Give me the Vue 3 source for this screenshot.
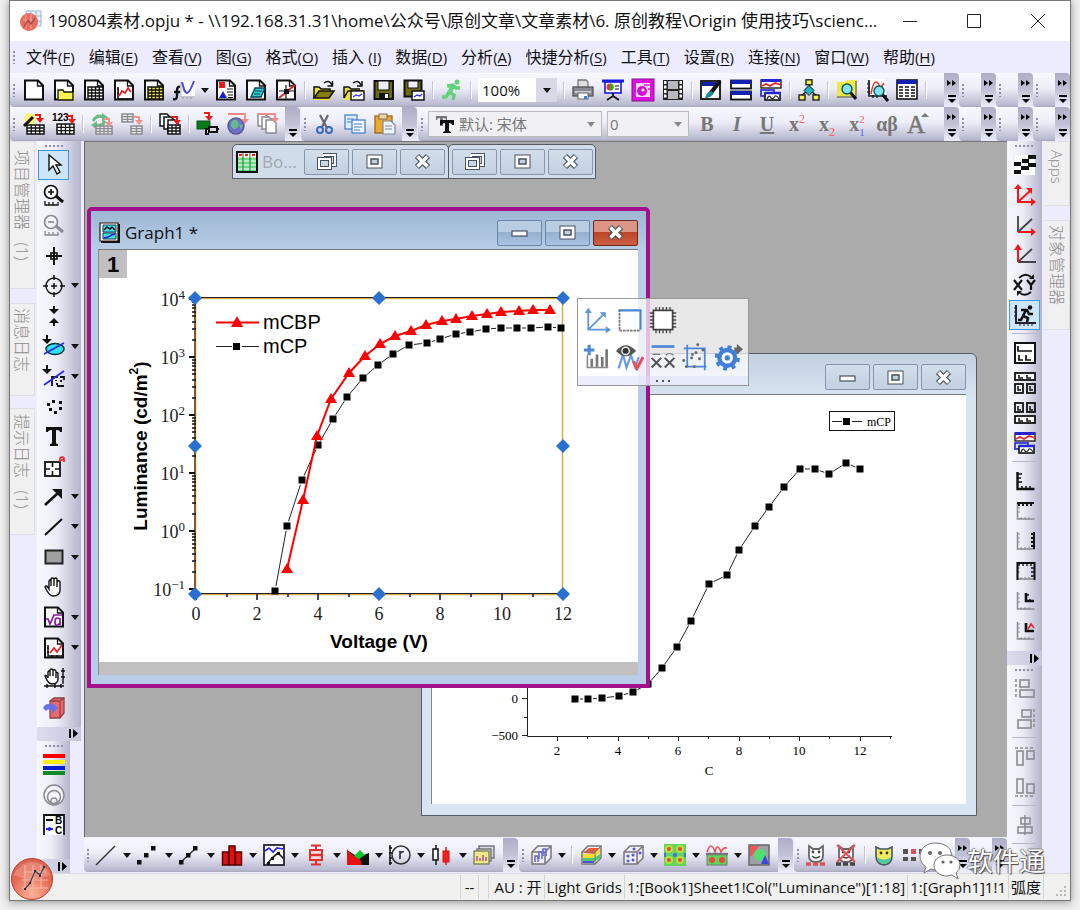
<script setup>
const K = '#111'
const G = '#8a8a90'
const p = (d, stroke = K, w = 2, fill = 'none') =>
  `<path d="${d}" fill="${fill}" stroke="${stroke}" stroke-width="${w}"/>`
const f = (d, fill = K) => `<path d="${d}" fill="${fill}"/>`
const r = (x, y, w, h, fill, stroke = 'none', sw = 1) =>
  `<rect x="${x}" y="${y}" width="${w}" height="${h}" fill="${fill}" stroke="${stroke}" stroke-width="${sw}"/>`
const c = (x, y, rad, fill, stroke = 'none', sw = 1) =>
  `<circle cx="${x}" cy="${y}" r="${rad}" fill="${fill}" stroke="${stroke}" stroke-width="${sw}"/>`
const grid = (x, y, w, h, nx, ny, fill = '#fff', stroke = K) => {
  let d = ''
  for (let i = 1; i < nx; i++) d += `M${x + (w * i) / nx} ${y}v${h}`
  for (let i = 1; i < ny; i++) d += `M${x} ${y + (h * i) / ny}h${w}`
  return r(x, y, w, h, fill, stroke, 1.5) + p(d, stroke, 1.3)
}
const doc = p('M2 1.5h13l5 5v14H2z', K, 2, '#fff') + p('M14.5 1.5v5.5h5', K, 1.3)
const redArrow = (x, y, col = '#f01818') => p(`M${x} ${y}h5v4`, col, 2) + f(`M${x + 1} ${y + 3}h8l-4 5z`, col)
const lens = (x, y) => p(`M${x + 3} ${y + 3}l6 7`, '#112', 3) + c(x, y, 5, '#7fe4f0', '#155', 1.4)
const page3 = (col) =>
  p('M1 1h7l3 3v9H1z', col, 1.5, '#fff') + p('M5 4h7l3 3v9H5z', col, 1.5, '#fff') + p('M9 7h7l3 3v10H9z', col, 1.5, '#fff')
const cube = p('M2 8l6-6h13v12l-6 6H2z', '#777', 1.5, '#eeeef8') + p('M2 8h13v12M15 8l6-6', '#777', 1.5)
const frameAxes = p('M3.5 2v17h17', '#8a8a90', 1.5) + p('M3 4h3M3 8h3M3 12h3M7 17v3M11 17v3M15 17v3', '#8a8a90', 1)
const dog = p('M4 2v10q0 6 7 6t7-6V2l-4 3H8z', '#666', 1.8, '#fff') + c(8, 8, 1.4, '#444') + c(14, 8, 1.4, '#444') + p('M7 12q4 4 8 0', '#444', 1.4)

const icons = {
  newProject: doc,
  newFolder: doc + f('M5 11h6l1 2h9v9H5z', '#f2f255') + p('M5 20V11h5l1 2h9v8H5', K, 1.3),
  newBook: doc + grid(5, 8, 15, 12, 4, 4),
  newGraph: doc + p('M5 8v12h14', K, 1.6) + p('M6 17l3-5 3 2 3-5 3 4', '#e22', 1.8) + p('M4 10h2M4 14h2M9 19v2M14 19v2', K, 1),
  newMatrix: doc + grid(5, 8, 15, 12, 4, 4, '#f5ec3c'),
  newFunction: r(8, 2, 14, 15, '#fff') + p('M8 3v15h13', '#b8b8c4', 1) + p('M9 3c2 8 3 11 5 11s4-4 7-12', '#4a48e8', 2) + p('M7 8q-3-1-3 4v5q0 4-4 3M1 13h6', K, 2.4) + p('M10 18v2M14 18v2M18 18v2', '#999', 1),
  newLayout: doc + r(4, 3, 6, 6, '#f01818') + p('M12 10h6M12 13h6', K, 1.2) + f('M4 19l4-7 4 7z', '#1818e0') + p('M13 16h5M13 18.5h5', K, 1),
  newNotes: doc + p('M6 18l4-9h10l-4 9z', '#045', 1.3, '#33ccd0') + p('M9 15h6M10 12h7', '#045', 1),
  newExcel: doc + p('M4 12h16M11 6v14', K, 1.2) + p('M4 19L20 6', '#e22', 2) + r(9, 10, 5, 5, K),
  open: f('M1 8h6l2 2h9v11H1z', '#e8e040') + p('M1 19V8h5l2 2h9v2', K, 1.5) + p('M1 19l5-7h15l-5 7z', K, 1.5, '#857d10') + p('M11 4q5-4 8 2M19.5 2v5h-5', K, 1.5),
  openTemplate: f('M1 8h6l2 2h8v11H1z', '#e8e040') + p('M1 19V8h5l2 2h9M1 19l4-7h15', K, 1.5) + p('M10 4q5-4 8 2M19 2v5h-5', K, 1.5) + r(8, 12, 13, 9, '#fff', K, 1.4) + p('M10 18l3-2 3 1 3-2', '#33e', 1.3),
  save: r(1.5, 2, 18.5, 18, '#6b6a10', K, 2) + r(5, 2, 11, 9, '#eef', K, 1) + r(6, 14, 10, 6, K) + r(12, 15, 3, 4, '#fff'),
  saveTemplate: r(1.5, 1.5, 17, 16, '#6b6a10', K, 2) + r(5, 2, 10, 7, '#eef', K, 1) + r(9, 12, 12, 9, '#fff', K, 1.5) + p('M11 18l3-2 3 1 2-2', '#33e', 1.4),
  run: c(16, 3, 2.5, '#62d27a') + p('M6 7l6-1 3 3 4 0M12 7l-4 6 5 3-1 5M9 12l-4 6H1M12 7l-2 5', '#62d27a', 3.4),
  print: f('M6 1h9l1 7H5z', '#ddd') + p('M6 8V1h8l2 2v5', '#777', 1.3) + r(1, 8, 20, 9, '#8a8a94', '#555', 1.3) + r(3, 12, 16, 2, '#c8c8d0') + r(6, 14, 10, 6, '#fff', '#666', 1) + r(12, 17, 3, 3, '#38c'),
  slide: p('M0 2h22', '#1a1ae0', 3) + r(3, 3, 16, 11, '#fff', '#1a1ae0', 1.6) + c(8, 8, 3.5, '#e33') + f('M8 8V4.5a3.5 3.5 0 0 1 0 7z', '#1b1') + p('M13 7h4M13 10h4', K, 1) + p('M11 14v4M5 21l6-4 6 4', K, 1.8),
  video: r(0, 0, 22, 22, '#e010e0', '#80108a', 1) + r(4, 4, 14, 14, '#ffd7ff') + c(10, 12, 5, '#d010d0') + c(11, 11, 1.6, '#fff') + p('M12 6h5M16 10h2', '#e010e0', 1.6),
  film: r(1, 1, 20, 20, '#222') + r(6, 2, 10, 8, '#b8b8c0') + r(6, 12, 10, 8, '#b8b8c0') + [2, 6.5, 11, 15.5].map((y) => r(2, y, 2.5, 3, '#fff') + r(17.5, y, 2.5, 3, '#fff')).join(''),
  editPen: r(1, 2, 19, 18, '#fff', K, 1.8) + r(2, 3, 14, 4, '#1020a0') + p('M20 2L10 15', K, 4) + f('M11 12q-5 2-6 7 6 0 9-5z', '#188a90'),
  splitH: r(1, 1.5, 20, 8, '#fff', K, 1.8) + r(1, 1, 20, 4, '#1420b0') + r(1, 12.5, 20, 8, '#fff', K, 1.8) + r(1, 12, 20, 4, '#1420b0'),
  cascade: r(1, 1, 20, 8, '#fff', K, 1.3) + r(1, 0, 20, 3, '#2424d0') + p('M2 7l4-2 4 2 5-3 6 2', '#e22', 1.6) + r(1, 11, 13, 6, '#dde', '#2424d0', 1.6) + r(5, 14, 15, 7, '#fff', K, 1.6) + p('M5 14h16', '#2424d0', 2.5) + p('M7 20q2-5 4-1 2 2 4-2 2-1 4 3', '#333', 1.3),
  tree: r(8, 0.8, 6, 5, '#f2f255', K, 1.3) + p('M11 6v5M11 11L4 16M11 11l7 5', K, 1.4) + f('M11 6l5 5-5 5-5-5z', '#1cb8c8') + p('M11 6.5l5 5-5 5-5-5z', K, 1) + r(1, 16, 6, 5, '#f2f255', K, 1.3) + r(15, 16, 6, 5, '#f2f255', K, 1.3),
  findFolder: f('M1 3h8l2-2h10v18H1z', '#eeea48') + p('M20 2v16H1', '#777', 1.5) + lens(11, 10),
  findGraph: r(3, 0, 17, 18, '#fff') + p('M3 1v16h18', K, 1.6) + p('M1 5h3M1 9h3M1 13h3M7 16v3M11 16v3', K, 1.2) + p('M5 15q2-12 5-12t4 7l4-6', '#e33', 1.6) + lens(13, 12),
  table: r(1, 1, 20, 19, '#fff', K, 1.6) + r(1, 1, 20, 4, '#1420b0') + p('M3 8h4M9 8h4M15 8h4M3 11h4M9 11h4M15 11h4M3 14h4M9 14h4M15 14h4M3 17h4M9 17h4M15 17h4', K, 1.5),
  wizard: c(7, 6, 6, '#faf37a') + p('M1 13L10 4', K, 3) + grid(4, 12, 17, 9, 4, 3) + redArrow(12, 2),
  import123: '<text x="-1" y="8" font-size="10" font-weight="700" font-family="Liberation Sans">123</text>' + grid(4, 11, 17, 10, 4, 3) + redArrow(14, 3),
  reimport: p('M2 8q4-7 10-4M14 8q-3 6-9 4', '#6cbc80', 3) + f('M11 0l7 5-7 4zM6 8v9l-6-5z', '#6cbc80') + grid(5, 13, 16, 8, 4, 3, '#eee', G) + redArrow(13, 6, '#f09090'),
  cloneImport: grid(1, 1, 11, 8, 2, 3, '#eee', G) + grid(10, 13, 11, 8, 2, 3, '#eee', G) + redArrow(13, 4, '#f09090'),
  batch: page3(K) + grid(9, 12, 12, 9, 3, 3) + redArrow(13, 4),
  connect: r(0, 8, 13, 8, '#0a7a18', '#052', 1) + redArrow(7, 0) + r(12, 14, 8, 5, '#ddd', K, 2) + p('M20 16h2M12 16H9v5h3', K, 2),
  globe: c(9, 13, 8, '#7070c8', '#5a5a9a', 1.5) + f('M4 9q5-5 7 0t-3 7q-5 0-4-7zM12 11l4 1-2 5z', '#68b890') + p('M1 1h17v6', '#f08888', 1.8) + f('M14 6h8l-4 5z', '#f08888'),
  pagesRed: page3(G) + p('M1 1h17v4', '#f08888', 1.8) + f('M14 5h8l-4 5z', '#f08888'),
  cut: p('M6 2l7 13M14 2L8 14', '#667', 2.2) + c(6, 17, 3, 'none', '#3a6ab8', 2) + c(15, 17, 3, 'none', '#3a6ab8', 2),
  copy: r(1, 2, 12, 14, '#dcecff', '#4a82c8', 1.3) + p('M3 6h7M3 9h7', '#4a82c8', 1) + r(8, 7, 13, 13, '#eef6ff', '#4a82c8', 1.3) + p('M10 11h8M10 14h8M10 17h6', '#4a82c8', 1),
  paste: r(1, 3, 17, 17, '#eaa82e', '#9a6a18', 1.3) + r(5, 1, 8, 5, '#e8d8a0', '#866', 1) + p('M9 8h8l4 4v9H9z', '#7a8aa0', 1.2, '#eef4fb') + p('M11 13h7M11 16h7', '#7a8aa0', 1),
  bigger: '<text x="1" y="20" font-size="25" fill="#777" stroke="#777" stroke-width=".5" font-family="Liberation Serif">A</text>' + f('M15 4l4-4 4 4z', '#777'),
  pointer: p('M6 1v15l4-4 4 8 3-2-4-7h5z', K, 1.4, '#fff'),
  zoomIn: c(8, 8, 6.5, '#fff', K, 1.7) + p('M8 5v6M5 8h6', K, 1.7) + p('M13 12l7 6', K, 3) + p('M2 17v4h13v-3M6 18v3M10 18v3', K, 1.3),
  zoomOut: c(8, 8, 6.5, '#f4f4fa', G, 1.7) + p('M5 8h6', G, 1.7) + p('M13 12l7 6', G, 3) + p('M2 17v4h13v-3M6 18v3M10 18v3', G, 1.3),
  cross: p('M11 2v18M3 11h16', K, 2) + r(8, 8, 6, 6, 'none', K, 1.6),
  target: c(11, 11, 8, 'none', K, 1.4) + p('M11 0v5M11 17v5M0 11h5M17 11h5M11 8v6M8 11h6', K, 1.5),
  selectV: f('M10 1h2v3h4l-5 5-5-5h4zM10 21h2v-3h4l-5-5-5 5h4z'),
  ellipse: '<ellipse cx="12" cy="14" rx="9" ry="5.5" fill="#30dff0" stroke="#033" stroke-width="1.5"/>' + p('M1 19L21 8', '#2a2ae0', 1.6) + f('M3 0h2v4h4l-5 5-5-5h4z'),
  mask: p('M9 21v-9h6M13 19h2M13 16v-1M17 12h4v3M14 21h7M18 17v-2', K, 1.8) + p('M1 20L21 6', '#2a2ae0', 1.8) + f('M3 0h2v4h4l-5 5-5-5h4z'),
  dots: [[5, 9], [10, 6], [17, 7], [17, 13], [7, 14], [12, 17]].map(([x, y]) => r(x - 1, y - 1, 3, 3, K)).join(''),
  text: f('M3 2h16v5h-2q0-2-4-2v13q0 1 2 1v2H7v-2q2 0 2-1V5q-4 0-4 2H3z'),
  annotate: r(2, 6, 15, 14, '#fff', K, 1.8) + p('M9.5 6v5M9.5 15v5M2 13h5M12 13h5', K, 1.6) + p('M17 6V2q2-2 4 0v4M17 4h4', '#e22', 1.7),
  arrow: p('M2 19L15 7', K, 2.6) + f('M9 3h10v10z'),
  line: p('M2 19L19 3', K, 2),
  rect: r(2.5, 4.5, 17, 13, '#a0a0a0', '#222', 2),
  hand: p('M6 12V5q1-2 2 0v5V3q1-2 3 0v7V3q2-2 3 0v8V5q2-1 3 1v8q0 6-7 6-4 0-8-9 1-3 4 2z', K, 1.4, '#fff'),
  formula: doc + p('M3 13l2 0 2 5 4-9h8M17 12v7M17 13q-5-3-5 3t5 1', '#8a1aa0', 1.7),
  graphObj: doc + p('M5 8v11h14M4 11h2M4 15h2M9 18v2M14 18v2', K, 1.5) + p('M7 16l4-5 3 4 5-7', '#e22', 1.7),
  panScale: p('M5 11V5q1-2 2 0v4V3q1-2 3 0v6V3q2-1 3 1v7V6q2-1 2 1v5q0 5-6 5-4 0-7-8 1-2 3 2z', K, 1.4, '#fff') + p('M20 1v16M1 19h20M18 4h4M18 10h4M4 17v4M12 17v4M18 17v4', K, 1.4),
  box3d: p('M7 4l4-3h10v15l-4 5H7z', '#844', 1.3, '#ef6868') + p('M7 4h10v17M17 4l4-3', '#844', 1.3) + f('M0 11q3-6 9-3V5l6 6-6 6v-4q-4-2-6 1z', '#6a70e8'),
  palette: r(0, 0, 22, 4, '#f00') + r(0, 6, 22, 4, '#ffee10') + r(0, 12, 22, 4, '#0a20d0') + r(0, 17, 22, 4, '#118a28'),
  contour: c(11, 11, 10, '#f4f4fa', G, 1.5) + c(11, 13, 6.5, 'none', G, 1.5) + p('M8 20q-1-6 3-6t3 6z', G, 1.5),
  legendBc: p('M1 21V1h20v20', K, 1.8, '#fff') + p('M3 6h7', K, 2) + p('M3 15h7M6.5 13v4', '#22e', 2) + '<text x="12" y="10" font-size="10" font-weight="700" font-family="Liberation Sans">B</text><text x="12" y="20" font-size="10" font-weight="700" font-family="Liberation Sans">C</text>',
  checker: r(1, 1, 20, 20, '#fff') + f('M14 1h8v4h-8zM8 5h7v4H8zM0 8h7v4H0zM14 9h8v4h-8zM7 12h8v4H7zM0 16h7v4H0z'),
  axes3: p('M4 4v14h14M4 18L17 6', '#f01818', 2) + f('M0 5l4-5 4 5zM17 14l5 4-5 4zM12 4h6v6z', '#f01818'),
  axesX: p('M4 2v16M4 18L18 5', '#444', 1.8) + p('M4 18h14', '#f01818', 2) + f('M17 14l5 4-5 4z', '#f01818'),
  axesY: p('M4 18h18M4 18L18 5', '#444', 1.8) + p('M4 18V4', '#f01818', 2) + f('M0 6l4-6 4 6z', '#f01818'),
  swapXY: p('M0 6l8 10M8 6L0 16M13 6l4 5 4-5M17 11v5', K, 2.2) + p('M5 4q6-6 12-1M17 18q-6 5-11 1', K, 1.8) + f('M15 5h5V0zM8 17H3v5z'),
  runGraph: p('M2 1v18h20', '#223', 2) + p('M0 4h3M0 8h3M0 12h3M6 19v3M10 19v3M14 19v3M18 19v3', '#223', 1) + c(16, 3.5, 2.2, K) + p('M7 6h6l2 4h4M12 6l-3 6 5 2-1 4M9 12l-2 4H4', K, 2.6),
  layA: r(1, 1, 20, 20, '#fff', K, 2) + p('M4 4v5h14M5 13v5h4M12 13v5h5', K, 1.7),
  layB: r(1, 1, 20, 7, '#fff', K, 1.8) + p('M5 3v3h4M13 3v3h4M4 14v4h3M16 14v4h3', K, 1.5) + r(1, 12, 8, 9, 'none', K, 1.8) + r(13, 12, 8, 9, 'none', K, 1.8),
  layC: r(1, 14, 20, 7, '#fff', K, 1.8) + p('M5 16v3h4M13 16v3h4M4 4v4h3M16 4v4h3', K, 1.5) + r(1, 1, 8, 9, 'none', K, 1.8) + r(13, 1, 8, 9, 'none', K, 1.8),
  axBL: p('M3.5 2v17h17', K, 2.4) + p('M4 4h4M4 8h3M4 12h4M8 16v3M12 16v3M16 16v3', K, 1.5),
  axTop: frameAxes + p('M3 3h17M5 3v3M9 3v3M13 3v3M17 3v3', K, 2),
  axRight: frameAxes + p('M20 2v17M17 4h3M17 8h3M17 12h3M17 16h3', K, 2),
  axBox: frameAxes + p('M3.5 20V3h17v17', K, 2) + p('M5 3v3M9 3v3M13 3v3M17 3v3M17 8h3M17 12h3M17 16h3', K, 1.4),
  axInset: frameAxes + p('M12 3v8h8', K, 2.6) + p('M12 5h3M16 9v3', K, 1.5),
  axInsetR: frameAxes + p('M12 3v8h8', K, 2.6) + p('M14 9l3-5 3 4', '#e22', 1.6),
  alL: p('M2 1v20', G, 1.5).replace('/>', ' stroke-dasharray="3 2"/>') + r(6, 2, 9, 7, 'none', G, 1.6) + r(6, 12, 14, 7, 'none', G, 1.6),
  alR: p('M20 1v20', G, 1.5).replace('/>', ' stroke-dasharray="3 2"/>') + r(8, 2, 9, 7, 'none', G, 1.6) + r(4, 12, 13, 8, 'none', G, 1.6),
  alT: p('M1 2h20', G, 1.5).replace('/>', ' stroke-dasharray="3 2"/>') + r(3, 5, 6, 14, 'none', G, 1.6) + r(13, 5, 7, 8, 'none', G, 1.6),
  alB: p('M1 20h20', G, 1.5).replace('/>', ' stroke-dasharray="3 2"/>') + r(3, 3, 6, 14, 'none', G, 1.6) + r(13, 8, 7, 9, 'none', G, 1.6),
  alC: p('M11 1v20', G, 1.5) + r(7, 4, 9, 6, 'none', G, 1.6) + r(4, 13, 14, 6, 'none', G, 1.6),
  pLine: p('M1 21L20 2', '#333', 1.4),
  pScatter: r(0, 16, 4.5, 4.5, K) + r(7, 9, 4.5, 4.5, K) + r(14, 2, 4.5, 4.5, K),
  pLineSym: p('M2 18L17 4', '#333', 1.4) + r(0, 16, 4.5, 4.5, K) + r(7, 9, 4.5, 4.5, K) + r(14, 2, 4.5, 4.5, K),
  pBar: r(1.5, 8, 6, 13, '#e01010', '#500', 1.5) + r(8, 2, 6, 19, '#e01010', '#500', 1.5) + r(14.5, 8, 6, 13, '#e01010', '#500', 1.5),
  pPanel: r(1, 1, 20, 20, '#fff', '#223', 1.8) + p('M2 7l4-3 4 4 4-4 6 1', '#22e', 1.7) + p('M4 20l5-6 6-5 6 6', '#222', 1.7) + r(4, 18, 3, 3, K) + r(8, 13, 3, 3, K) + r(14, 8, 3, 3, K),
  pBox: p('M6 1.5h10M6 20.5h10M11 1v5M11 16v5', '#e03030', 2) + r(5, 6, 12, 10, '#ffdada', '#e03030', 2) + p('M5 11h12', '#e03030', 2.4),
  pArea: f('M0 6l11 7 11-4v12H0z') + f('M0 5q7 10 11 6l4 10H0z', '#e81010') + f('M7 12l6-6 5 5-6 4z', '#10c828'),
  pPolar: p('M1 1v20M0 4h3M0 9h3M0 14h3M0 19h3', K, 1.5) + c(12, 11, 9, 'none', '#333', 1.5) + p('M11 7v8M11 10q1-3 4-2', '#333', 1.7),
  pCandle: p('M5 1v20', K, 1.5) + r(2, 5, 5, 11, '#fff', K, 1.5) + p('M15 3v18', '#e01010', 1.5) + r(12, 7, 6, 11, '#f02020', '#e01010', 1),
  pTemplate: r(6, 2, 15, 12, '#ddd', '#667', 1.3) + r(4, 5, 14, 12, '#e8e8c0', '#667', 1.3) + r(1, 7, 15, 13, '#eee88a', '#776', 1.3) + p('M4 17v-5M7 17v-3M10 17v-6M13 17v-4', '#a58', 1.5),
  c3dBar: cube + p('M5 18v-6h3v6M9 15V8h3v7M13 12V5h3v7', '#6a6ad0', 1.6),
  c3dSurf: p('M2 8l6-6h13v12l-6 6H2z', '#777', 1.5, '#eeeef8') + f('M3 9l6-5h11l-6 6z', '#f05a30') + f('M3 10h11l6-5v4l-6 5H3z', '#f0e030') + f('M3 14h11l6-4v4l-6 4H3z', '#50c870') + f('M3 17h11v2H3z', '#4a50e0') + p('M15 8v12M2 8h13l6-6', '#777', 1),
  c3dScat: cube + [[6, 12], [11, 16], [11, 11], [6, 17], [12, 5], [18, 9]].map(([x, y]) => c(x, y, 1.5, '#55e')).join(''),
  cContour: r(0, 0, 22, 22, '#62d45c') + [[5, 5], [16, 5], [5, 16], [16, 16]].map(([x, y]) => c(x, y, 4, '#b8e040') + c(x, y, 2, '#e84838')).join('') + c(11, 11, 2, '#3a70e0') + r(0, 9, 2, 4, '#3a70e0') + r(20, 9, 2, 4, '#3a70e0'),
  cProfile: p('M1 8q4-12 8 0 2-10 6 0 2-5 6-4', '#f05050', 1.6) + r(1, 10, 20, 11, '#62d45c', '#777', 1) + p('M0 10h22', '#777', 2.5) + c(6, 16, 3, '#e84838') + c(16, 16, 3, '#e84838'),
  cImage: r(1, 1, 20, 20, '#a0a0a8', '#666', 1.5) + f('M2 2h9l-7 10H2z', '#f05858') + c(12, 11, 6, '#50e070') + f('M13 20l4-9 4 9z', '#3a48e0'),
  dogA: dog + p('M1 20h20', '#e05058', 3.5).replace('/>', ' stroke-dasharray="5 2"/>'),
  dogX: dog + p('M1 20h20', '#444', 3.5).replace('/>', ' stroke-dasharray="5 2"/>') + p('M2 1l18 17M20 1L2 18', '#e05058', 2),
  dogC: p('M3 3v9q0 8 8 9 8-1 8-9V3l-4 2H7z', '#456', 1.6, '#f2ea58') + f('M4 13q7 5 14 0-1 7-7 7t-7-7z', '#50c8a0') + c(8, 9, 1.4, '#333') + c(14, 9, 1.4, '#333'),
  blocks: r(0, 5, 5, 5, '#555') + r(8, 5, 5, 5, '#e05058') + r(16, 5, 5, 5, '#555') + r(0, 13, 5, 4, '#555') + r(8, 13, 5, 4, '#555')
}

const menus = [
  ['文件', 'F'], ['编辑', 'E'], ['查看', 'V'], ['图', 'G'], ['格式', 'O'], ['插入 ', 'I'], ['数据', 'D'], ['分析', 'A'],
  ['快捷分析', 'S'], ['工具', 'T'], ['设置', 'R'], ['连接', 'N'], ['窗口', 'W'], ['帮助', 'H']
]
const title = '190804素材.opju * - \\\\192.168.31.31\\home\\公众号\\原创文章\\文章素材\\6. 原创教程\\Origin 使用技巧\\scienc...'

const parse = (s) =>
  s.split(' ').map((t) => {
    if (t === '|') return { type: 'sep' }
    if (t[0] === '#') return { type: 'combo', id: t.slice(1) }
    if (t[0] === '@') return { type: 'glyph', id: t.slice(1) }
    return { type: 'btn', icon: t.replace('>', ''), arrow: t.endsWith('>') }
  })
const more = { items: [], end: 'double', cls: 'stub' }
const rows = [
  [
    { cls: 'grow', end: 'double', items: parse('newProject newFolder newBook newGraph newMatrix newFunction> newLayout newNotes newExcel | open openTemplate save saveTemplate | run | #zoom | print slide video film | editPen splitH cascade | tree | findFolder findGraph table |') },
    more, more, more
  ],
  [
    { cls: 'fit', end: 'plain', items: parse('wizard import123 | reimport cloneImport | batch | connect globe pagesRed') },
    { cls: 'fit', end: 'plain', items: parse('cut copy paste') },
    { cls: 'grow', end: 'double', items: parse('#font #size @bold @italic @underline @sup @sub @supsub @greek bigger') },
    more, more, more
  ]
]
const bottomRow = [
  { cls: 'fit', end: 'plain', items: parse('pLine> pScatter> pLineSym> pBar> pPanel> pBox> pArea> pPolar> pCandle> pTemplate') },
  { cls: 'fit', end: 'plain', items: parse('c3dBar> | c3dSurf> c3dScat> cContour> cProfile> cImage') },
  { cls: 'grow', end: 'double', items: parse('dogA dogX | dogC blocks') },
  more
]
const leftTools = parse('pointer zoomIn zoomOut cross target> selectV ellipse> mask> dots text annotate arrow> line> rect> hand formula> graphObj> panScale box3d')
const leftTools2 = parse('palette contour legendBc')
const rightTools = parse('checker axes3 axesX axesY swapXY runGraph | layA layB layC cascade | axBL axTop axRight axBox axInset axInsetR')
const rightTools2 = parse('alL alR | alT alB | alC |')
const combos = {
  zoom: { label: '缩放', value: '100%' },
  font: { label: '字体', value: '默认: 宋体' },
  size: { label: '字号', value: '0' }
}
const glyphs = {
  bold: ['加粗', '<b>B</b>'], italic: ['倾斜', '<b><i>I</i></b>'], underline: ['下划线', '<u>U</u>'],
  sup: ['上标', 'x<sup>2</sup>'], sub: ['下标', 'x<sub>2</sub>'], supsub: ['上下标', 'x<em><i>2</i><i>1</i></em>'],
  greek: ['希腊字母', 'αβ']
}

const redPts = [[287, 569], [303, 500], [317, 436], [331, 399], [349, 373], [365, 356], [380, 344], [395, 336], [411, 331], [426, 325], [442, 321], [456, 319], [472, 316], [487, 314], [501, 312], [519, 311], [533, 310], [550, 310]]
const blackPts = [[275, 591], [287, 526], [302, 480], [318, 445], [333, 419], [347, 397], [363, 378], [378, 365], [393, 354], [409, 345], [427, 343], [440, 339], [456, 334], [470, 332], [486, 329], [501, 328], [517, 328], [531, 328], [548, 327], [561, 328]]
const secondPts = [[575, 699], [588, 699], [602, 698], [619, 696], [633, 692], [648, 684], [662, 668], [677, 647], [691, 621], [709, 584], [727, 575], [739, 550], [755, 526], [769, 507], [784, 487], [800, 469], [815, 469], [829, 474], [846, 463], [860, 469]]
const joinGaps = (pts, gap) => {
  let d = ''
  for (let i = 1; i < pts.length; i++) {
    const [ax, ay] = pts[i - 1]
    const [bx, by] = pts[i]
    const len = Math.hypot(bx - ax, by - ay)
    if (len <= gap * 2) continue
    const ux = ((bx - ax) / len) * gap
    const uy = ((by - ay) / len) * gap
    d += `M${ax + ux} ${ay + uy}L${bx - ux} ${by - uy}`
  }
  return d
}
const redLine = 'M' + redPts.map((q) => q.join(' ')).join('L')
const triangles = redPts.map(([x, y]) => `M${x} ${y - 6}l6 10h-12z`).join('')
const squares = (pts, s) => pts.map(([x, y]) => `M${x - s / 2} ${y - s / 2}h${s}v${s}h-${s}z`).join('')
const decades = [4, 3, 2, 1, 0, -1].map((e, i) => ({ e, y: 299 + 58 * i }))
const minorY = decades.slice(1).flatMap(({ y }) => [2, 3, 4, 5, 6, 7, 8, 9].map((n) => `M192 ${Math.round(y - 58 * Math.log10(n))}h4`)).join('')
const xTicks = [0, 2, 4, 6, 8, 10, 12].map((v) => ({ v, x: Math.round(195.5 + 30.6 * v) }))
const handles = [[195, 298], [379, 298], [563, 298], [195, 446], [563, 446], [195, 594], [379, 594], [563, 594]]
const handlePath = handles.map(([x, y]) => `M${x} ${y - 7}l7 7-7 7-7-7z`).join('')
const xTicks2 = [2, 4, 6, 8, 10, 12].map((v) => ({ v, x: Math.round(557 + 30.3 * (v - 2)) }))

const winBtn = {
  restore: p('M9 4h12v10h-5', '#4a535e', 4) + p('M9 4h12v10h-5M9 4v4', '#fff', 2) + r(5, 8, 11, 9, 'none', '#4a535e', 4) + r(5, 8, 11, 9, 'none', '#fff', 2),
  max: r(5, 4, 15, 13, '#fff', '#4a535e', 1) + r(9, 8, 7, 5, '#c5d1e0', '#4a535e', 1.5),
  min: r(5, 9, 15, 5, '#fff', '#4a535e', 1.2),
  close: p('M7 5l11 11M18 5L7 16', '#4a535e', 6) + p('M7.5 5.5l10 10M17.5 5.5l-10 10', '#fff', 3.6)
}
const winLabel = { restore: '还原', max: '最大化', min: '最小化', close: '关闭' }

const mini = {
  axes: p('M6 5v22h22M6 27L24 9', '#5f93d6', 2) + f('M2 8l4-6 4 6zM26 23l6 4-6 4zM19 7h7v7z', '#5f93d6'),
  frame: r(4, 4, 23, 23, '#fff') + p('M3 5h25v22', '#4b86d8', 2.5) + p('M4 4v24h24', '#777', 2).replace('/>', ' stroke-dasharray="3 1"/>'),
  chip: r(5, 5, 22, 22, '#fff', '#444', 2) + p('M8 1v4M12 1v4M16 1v4M20 1v4M24 1v4M8 27v4M12 27v4M16 27v4M20 27v4M24 27v4M1 8h4M1 12h4M1 16h4M1 20h4M1 24h4M27 8h4M27 12h4M27 16h4M27 20h4M27 24h4', '#444', 1.5),
  addBars: p('M1 8h12M7 2v12', '#4b86d8', 3.5) + p('M5 14v14h24', '#888', 1.8) + p('M10 27v-9M16 27V13M22 27v-11M27 27V7', '#777', 3),
  eye: p('M3 29l5-16 4 15 5-14 5 14 4-12', '#6a9be0', 2.5) + p('M20 21l4 8 7-13', '#ee4a58', 3.4) + f('M0 9q11-13 23 0-12 12-23 0z', '#555') + c(11, 9, 5, '#eee') + c(11, 9, 3.4, '#333'),
  errX: p('M3 4h26', '#4b86d8', 3) + p('M4 13h9M19 14q4-4 9 0', '#777', 1.3) + p('M3 17l11 11M14 17L3 28M18 17l11 11M29 17L18 28', '#555', 2.4),
  crop: p('M6 2v25h22M2 6h24v25', '#4b86d8', 2) + [[18, 2], [24, 8], [16, 11], [11, 17], [20, 18], [2, 20], [5, 27], [14, 27], [12, 13]].map(([x, y]) => c(x, y, 1.7, '#666')).join(''),
  gear: '<circle cx="14" cy="17" r="9" fill="#fff" stroke="#3f80d6" stroke-width="5"/><circle cx="14" cy="17" r="12.5" fill="none" stroke="#3f80d6" stroke-width="4" stroke-dasharray="4.6 5.2"/>' + c(14, 17, 3, '#3f80d6') + f('M25 1l7 6-7 6V9h-3V5h3z', '#666')
}
const miniRows = [['axes', 'frame', 'chip'], ['addBars', 'eye', 'errX', 'crop', 'gear']]
</script>

<template>
  <main class="app-window">
    <header class="titlebar">
      <svg class="title-icon" viewBox="0 0 22 22"><path d="M6 1h15v15H6z" fill="#e9f0fa" stroke="#98b4d8" /><path d="M11 1v15M16 1v15M6 6h15M6 11h15" stroke="#98b4d8" /><circle cx="9" cy="12" r="9" fill="#ea6a5e" /><path d="M3 10h12M6 5v14M11 4v15" stroke="#fff" opacity=".4" /><path d="M4 17l4-7 3 4 4-6" fill="none" stroke="#94403c" stroke-width="1.5" opacity=".8" /></svg>
      <h1>{{ title }}</h1>
      <div class="win-controls">
        <button aria-label="最小化"><svg viewBox="0 0 16 16"><path d="M1 8.5h14" /></svg></button>
        <button aria-label="最大化"><svg viewBox="0 0 16 16"><path d="M1.5 1.5h13v13h-13z" /></svg></button>
        <button aria-label="关闭"><svg viewBox="0 0 16 16"><path d="M1 1l14 14M15 1L1 15" /></svg></button>
      </div>
    </header>

    <nav class="menubar">
      <i class="grip"></i>
      <button v-for="m in menus" :key="m[1]">{{ m[0] }}<span>(<u>{{ m[1] }}</u>)</span></button>
    </nav>

    <div v-for="(row, ri) in rows" :key="ri" class="toolrow">
      <section v-for="(g, gi) in row" :key="gi" class="group" :class="g.cls">
        <i class="grip"></i>
        <template v-for="(it, i) in g.items" :key="i">
          <i v-if="it.type === 'sep'" class="sep"></i>
          <label v-else-if="it.type === 'combo'" class="combo" :class="it.id">
            <svg v-if="it.id === 'font'" class="tt" viewBox="0 0 20 18"><path d="M1 1h11v4h-1q0-2-3-2v8H5V3Q2 3 2 5H1z" fill="#777" /><path d="M5 5h14v5h-2q0-2-3-2v8l2 1v1H8v-1l2-1V8q-3 0-3 2H5z" fill="#111" /></svg>
            <select :aria-label="combos[it.id].label"><option>{{ combos[it.id].value }}</option></select>
            <b class="caret"></b>
          </label>
          <button v-else-if="it.type === 'glyph'" class="tool glyph" :class="it.id" :aria-label="glyphs[it.id][0]" v-html="glyphs[it.id][1]"></button>
          <template v-else>
            <button class="tool" :aria-label="it.icon"><svg viewBox="0 0 22 22" v-html="icons[it.icon]"></svg></button>
            <button v-if="it.arrow" class="drop" :aria-label="it.icon + ' menu'"><b class="caret"></b></button>
          </template>
        </template>
        <button class="overflow" aria-label="更多按钮"><svg viewBox="0 0 15 34"><path v-if="g.end === 'double'" d="M3 7l4 3-4 3zM8 7l4 3-4 3z" /><path d="M4 22h8v2H4zM4 26h8l-4 4z" /></svg></button>
      </section>
    </div>

    <div class="body">
      <aside class="dock left-dock">
        <button class="tab t1">项目管理器 &nbsp;&nbsp;(1)</button>
        <button class="tab t2">消息日志</button>
        <button class="tab t3">提示日志 &nbsp;&nbsp;(1)</button>
      </aside>

      <div class="left-tools">
        <section class="vgroup main-tools">
          <i class="hgrip"></i>
          <div v-for="(it, i) in leftTools" :key="i" class="vitem">
            <button class="tool" :class="{ active: i === 0 }" :aria-label="it.icon"><svg viewBox="0 0 22 22" v-html="icons[it.icon]"></svg></button>
            <button v-if="it.arrow" class="drop" :aria-label="it.icon + ' menu'"><b class="caret"></b></button>
          </div>
          <button class="voverflow" aria-label="更多按钮"><svg viewBox="0 0 9 9"><path d="M0 0h2v9H0zM4 0l5 4.5-5 4.5z" /></svg></button>
        </section>
        <section class="vgroup sub-tools">
          <i class="hgrip"></i>
          <div v-for="(it, i) in leftTools2" :key="i" class="vitem">
            <button class="tool" :aria-label="it.icon"><svg viewBox="0 0 22 22" v-html="icons[it.icon]"></svg></button>
          </div>
          <button class="voverflow" aria-label="更多按钮"><svg viewBox="0 0 9 9"><path d="M0 0h2v9H0zM4 0l5 4.5-5 4.5z" /></svg></button>
        </section>
      </div>

      <div class="center">
        <div class="workspace">
          <div class="mini-win book">
            <svg class="book-icon" viewBox="0 0 22 22"><path d="M1 1h20v20H1z" fill="#6fd880" stroke="#111" stroke-width="2" /><path d="M2 2h18v4H2z" fill="#fff" /><path d="M3 4h3M9 4h3M16 4h3" stroke="#e22" stroke-width="2.5" /><path d="M2 6h18M2 10h18M2 14h18M2 18h18" stroke="#fff" stroke-width="1" /><path d="M7 2v18M14 2v18" stroke="#174" stroke-width="1" /></svg>
            <span>Bo...</span>
            <div class="wbtns"><button v-for="b in ['restore', 'max', 'close']" :key="b" :aria-label="winLabel[b]"><svg viewBox="0 0 25 21" v-html="winBtn[b]"></svg></button></div>
          </div>
          <div class="mini-win blank">
            <div class="wbtns"><button v-for="b in ['restore', 'max', 'close']" :key="b" :aria-label="winLabel[b]"><svg viewBox="0 0 25 21" v-html="winBtn[b]"></svg></button></div>
          </div>

          <article class="child second">
            <header><div class="wbtns"><button v-for="b in ['min', 'max', 'close']" :key="b" :aria-label="winLabel[b]"><svg viewBox="0 0 25 21" v-html="winBtn[b]"></svg></button></div></header>
            <div class="canvas">
              <svg viewBox="432 395 534 409">
                <path d="M527.5 430V736.5H892M522 698.5h5M522 735.5h5M524 717.5h3" class="thin" />
                <path v-for="t in xTicks2" :key="t.v" :d="`M${t.x}.5 736v5M${t.x + 30}.5 736v3`" class="thin" />
                <text v-for="t in xTicks2" :key="'l' + t.v" :x="t.x" y="755" class="song13 mid">{{ t.v }}</text>
                <text x="518" y="703" class="song13 end">0</text>
                <text x="518" y="740" class="song13 end">−500</text>
                <text x="709" y="775" class="song13 mid">C</text>
                <path :d="joinGaps(secondPts, 5)" class="thin" />
                <path :d="squares(secondPts, 7)" />
                <rect x="829.5" y="411.5" width="65" height="19" fill="#fff" stroke="#111" />
                <path d="M832 421.5h10M852 421.5h10" class="thin" />
                <path d="M843 418h7v7h-7z" />
                <text x="867" y="426" class="song12">mCP</text>
              </svg>
            </div>
          </article>

          <article class="child graph">
            <header>
              <svg class="graph-icon" viewBox="0 0 22 22"><path d="M2 2h19v19H2z" fill="#111" /><path d="M1 1h18v18H1z" fill="#fff" stroke="#311" stroke-width="1.2" /><path d="M4 3h13v7H4zM4 11h13v6H4z" fill="#48dbe8" stroke="#145" stroke-width="1" /><path d="M5 8l3-3 3 2 2-2 3 3" fill="none" stroke="#111" stroke-width="1.5" /><path d="M5 16q5-1 6-2t5-2" fill="none" stroke="#22c" stroke-width="1.5" /></svg>
              <h2>Graph1 *</h2>
              <div class="wbtns"><button v-for="b in ['min', 'max', 'close']" :key="b" :class="{ red: b === 'close' }" :aria-label="winLabel[b]"><svg viewBox="0 0 25 21" v-html="winBtn[b]"></svg></button></div>
            </header>
            <div class="canvas">
              <svg viewBox="99 250 539 425">
                <path d="M99 662h539v13H99z" fill="#c0c0c0" />
                <path d="M99 250h28v28H99z" fill="#c0c0c0" />
                <text x="113" y="272" class="layer mid">1</text>
                <path d="M195.5 298.5h367v296h-367z" fill="none" stroke="#dba84a" stroke-width="1.5" />
                <path d="M195 298v297" stroke="#8a5a22" stroke-width="2" />
                <path d="M195 297.5h367M195 593.5h367" class="thin" />
                <path v-for="t in decades" :key="t.e" :d="`M189 ${t.y}h6`" stroke="#111" stroke-width="2" />
                <path :d="minorY" stroke="#111" stroke-width="1.5" />
                <path v-for="t in xTicks" :key="t.v" :d="`M${t.x} 594v6`" stroke="#111" stroke-width="1.5" />
                <path v-for="t in xTicks.slice(0, 6)" :key="'m' + t.v" :d="`M${t.x + 31} 594v3`" stroke="#111" stroke-width="1.5" />
                <text v-for="t in decades" :key="'d' + t.e" x="185" :y="t.y + 7" class="song18 end">10<tspan dy="-7" class="song13">{{ t.e < 0 ? '−1' : t.e }}</tspan></text>
                <text v-for="t in xTicks" :key="'x' + t.v" :x="t.x" y="620" class="song18 mid">{{ t.v }}</text>
                <text x="379" y="648" class="axis mid">Voltage (V)</text>
                <text transform="translate(147 446) rotate(-90)" class="axis mid">Luminance (cd/m<tspan dy="-9" class="axis-sup">2</tspan><tspan dy="9">)</tspan></text>
                <path :d="handlePath" fill="#2a70d0" />
                <path :d="joinGaps(blackPts, 5)" class="thin" />
                <path :d="squares(blackPts, 7)" />
                <path :d="redLine" fill="none" stroke="#f00" stroke-width="2" />
                <path :d="triangles" fill="#f00" />
                <path d="M216 322.5h43" stroke="#f00" stroke-width="2" />
                <path d="M237 316l6 11h-12z" fill="#f00" />
                <path d="M216 346.5h16M242 346.5h17" class="thin" />
                <path d="M233 343h7v7h-7z" />
                <text x="263" y="329" class="legend">mCBP</text>
                <text x="263" y="353" class="legend">mCP</text>
              </svg>
            </div>
          </article>

          <div class="mini-bar">
            <div v-for="(mr, i) in miniRows" :key="i" class="mini-row">
              <button v-for="m in mr" :key="m" :aria-label="m"><svg viewBox="0 0 32 32" v-html="mini[m]"></svg></button>
            </div>
            <button class="mini-more" aria-label="展开"><svg viewBox="0 0 16 4"><path d="M1 1h2v2H1zM7 1h2v2H7zM13 1h2v2h-2z" fill="#555" /></svg></button>
          </div>
        </div>

        <div class="toolrow bottom">
          <section v-for="(g, gi) in bottomRow" :key="gi" class="group" :class="g.cls">
            <i class="grip"></i>
            <template v-for="(it, i) in g.items" :key="i">
              <i v-if="it.type === 'sep'" class="sep"></i>
              <template v-else>
                <button class="tool" :aria-label="it.icon"><svg viewBox="0 0 22 22" v-html="icons[it.icon]"></svg></button>
                <button v-if="it.arrow" class="drop" :aria-label="it.icon + ' menu'"><b class="caret"></b></button>
              </template>
            </template>
            <button class="overflow" aria-label="更多按钮"><svg viewBox="0 0 15 34"><path v-if="g.end === 'double'" d="M3 7l4 3-4 3zM8 7l4 3-4 3z" /><path d="M4 22h8v2H4zM4 26h8l-4 4z" /></svg></button>
          </section>
        </div>
      </div>

      <div class="right-tools">
        <section v-for="(list, li) in [rightTools, rightTools2]" :key="li" class="vgroup" :class="{ last: li }">
          <i class="hgrip"></i>
          <template v-for="(it, i) in list" :key="i">
            <i v-if="it.type === 'sep'" class="hsep"></i>
            <div v-else class="vitem"><button class="tool" :class="{ active: it.icon === 'runGraph' }" :aria-label="it.icon"><svg viewBox="0 0 22 22" v-html="icons[it.icon]"></svg></button></div>
          </template>
          <button v-if="!li" class="voverflow" aria-label="更多按钮"><svg viewBox="0 0 9 9"><path d="M0 0h2v9H0zM4 0l5 4.5-5 4.5z" /></svg></button>
        </section>
      </div>

      <aside class="dock right-dock">
        <button class="tab t4">Apps</button>
        <button class="tab t5">对象管理器</button>
      </aside>
    </div>

    <footer class="status">
      <span class="first">--</span><span class="au">AU : 开</span><span>Light Grids</span><span>1:[Book1]Sheet1!Col("Luminance")[1:18]</span><span>1:[Graph1]1!1</span><span>弧度</span>
      <svg class="resize" viewBox="0 0 12 12"><path d="M9 1h2v2H9zM5 5h2v2H5zM9 5h2v2H9zM1 9h2v2H1zM5 9h2v2H5zM9 9h2v2H9z" /></svg>
    </footer>

    <svg class="orb" viewBox="0 0 44 44">
      <defs><radialGradient id="orbFill" cx=".5" cy=".85" r=".9"><stop offset="0" stop-color="#ffb49c" /><stop offset=".55" stop-color="#e66a54" /><stop offset="1" stop-color="#d8644e" /></radialGradient></defs>
      <circle cx="22" cy="22" r="20.5" fill="url(#orbFill)" stroke="#b8402c" />
      <path d="M4 18a19 19 0 0 1 36 0q-18 8-36 0z" fill="#fff" opacity=".2" />
      <path d="M15 8v24M23 8v24M31 8v24M14 15h22M12 23h26M12 31h26" stroke="#f8b8a8" fill="none" />
      <path d="M15 32l5-6 5-12 5 4 4-8" fill="none" stroke="#345" stroke-width="1.2" />
      <path d="M14 31h2v2h-2zM19 25h2v2h-2zM24 13h2v2h-2zM29 18h2v2h-2zM33 9h2v2h-2z" fill="#235" />
    </svg>

    <div class="watermark">
      <svg viewBox="0 0 42 38"><path d="M16 1C7 1 1 7 1 14q0 7 6 11l-2 6 7-4q5 2 9 1-2-9 6-13 3-2 6-2Q31 1 16 1z" fill="#fff" stroke="#777" /><path d="M28 13c-8 0-13 5-13 10 0 7 6 11 13 11l5-1 6 4-2-6q4-3 4-8c0-6-6-10-13-10z" fill="#fff" stroke="#777" /><circle cx="11" cy="11" r="2" fill="#666" /><circle cx="21" cy="11" r="2" fill="#666" /><circle cx="24" cy="20" r="1.6" fill="#666" /><circle cx="32" cy="20" r="1.6" fill="#666" /></svg>
      <span>软件通</span>
    </div>
  </main>
</template>

<style>
body { background: #efefef; }
</style>

<style scoped>
* { box-sizing: border-box; }
button { border: 0; padding: 0; margin: 0; background: none; color: inherit; font: inherit; display: block; }
i, em { font-style: normal; }
.app-window { position: relative; margin: 0 9px 9px; height: calc(100vh - 9px); min-height: 760px; display: flex; flex-direction: column; border: 1px solid #777; background: #ececfe; box-shadow: 0 1px 8px rgba(0, 0, 0, .4); font-family: "Open Sans", "Noto Sans CJK SC", sans-serif; color: #111; overflow: hidden; }

.titlebar { flex: none; height: 40px; display: flex; align-items: center; background: #fff; padding-left: 10px; }
.title-icon { width: 22px; height: 22px; flex: none; margin-right: 6px; }
.titlebar h1 { margin: 0; flex: 1; font-size: 17px; line-height: 24px; font-weight: 400; white-space: nowrap; overflow: hidden; text-overflow: ellipsis; }
.win-controls { display: flex; flex: none; }
.win-controls button { width: 64px; height: 38px; display: grid; place-items: center; }
.win-controls svg { width: 16px; height: 16px; fill: none; stroke: #222; stroke-width: 1; }

.menubar { flex: none; height: 32px; display: flex; align-items: center; }
.menubar button { padding: 0 7px; height: 28px; font-size: 16px; line-height: 28px; white-space: pre; }
.menubar span { font-size: 15px; }
.menubar u { text-underline-offset: 2px; text-decoration-thickness: 1px; }

.grip { flex: none; width: 9px; height: 14px; background: radial-gradient(circle, #8e8ea6 1px, transparent 1px) 2px 0 / 4px 4px repeat-y; }
.toolrow { flex: none; height: 34px; display: flex; }
.group { flex: none; display: flex; align-items: center; height: 34px; min-width: 0; background: linear-gradient(#f8f8ff, #ededf8 45%, #b9b9d0 94%, #a6a6bc); border-radius: 0 0 4px 4px; }
.group.grow { flex: 1; }
.group.stub { width: 37px; }
.group.fit { margin-right: 1px; }
.tool { flex: none; width: 30px; height: 30px; display: grid; place-items: center; }
.tool svg { width: 22px; height: 22px; display: block; overflow: visible; }
.drop { flex: none; width: 12px; height: 30px; display: grid; place-items: center; }
.caret { width: 0; height: 0; border: 4px solid transparent; border-top: 5px solid #111; border-bottom: 0; }
.sep { flex: none; width: 8px; height: 18px; background: linear-gradient(90deg, transparent 3px, #c4c4d6 3px, #c4c4d6 4px, #fff 4px, #fff 5px, transparent 5px); }
.overflow { flex: none; width: 15px; height: 34px; margin-left: auto; background: linear-gradient(#adadc6, #c2c2d6 50%, #ececfa); border-radius: 0 4px 0 0; }
.overflow svg { width: 15px; height: 34px; display: block; }
.fit .overflow { margin-left: 2px; }

.combo { position: relative; flex: none; display: flex; align-items: center; height: 24px; margin: 0 3px; background: #fff; }
.combo select { appearance: none; border: 0; background: none; flex: 1; min-width: 0; height: 24px; padding: 0 4px; font-family: "Open Sans", "Noto Sans CJK SC", sans-serif; font-size: 15px; color: #111; }
.combo .caret { flex: none; margin-right: 6px; pointer-events: none; }
.combo.zoom { width: 79px; background: linear-gradient(90deg, #fff 58px, #d8d8e6 58px); }
.combo.font { width: 174px; height: 26px; margin: 0 5px 0 1px; background: #f0f0f2; border: 1px solid #bbb; padding-left: 6px; }
.combo.size { width: 82px; height: 26px; margin: 0 3px 0 0; background: #f0f0f2; border: 1px solid #bbb; }
.combo.size select { padding: 0 2px; }
.combo.font select, .combo.size select { color: #777; }
.combo.font .caret, .combo.size .caret { border-top-color: #888; }
.tt { width: 20px; height: 18px; flex: none; }
.glyph { font-family: "Liberation Serif", serif; font-size: 20px; line-height: 30px; font-weight: 700; color: #777; display: block; text-align: center; white-space: nowrap; }
.glyph :deep(sup), .glyph :deep(sub) { font-size: 12px; line-height: 0; color: #f06060; font-weight: 400; }
.glyph :deep(em) { display: inline-flex; flex-direction: column; vertical-align: middle; font-size: 11px; line-height: 13px; font-style: normal; font-weight: 400; color: #f06060; }
.glyph :deep(em i) { font-style: normal; }
.glyph :deep(em i + i) { color: #6060f0; }

.body { flex: 1; min-height: 0; display: flex; }
.dock { flex: none; display: flex; flex-direction: column; align-items: flex-start; }
.left-dock { width: 27px; }
.right-dock { width: 28px; align-items: flex-end; }
.tab { writing-mode: vertical-rl; text-orientation: sideways; width: 25px; line-height: 25px; font-size: 16px; font-weight: 300; color: #8c8c8c; background: #f0f0f0; border: 1px solid #e0e0e4; border-left: 0; text-align: left; white-space: nowrap; }
.t1 { height: 148px; padding-top: 8px; margin-bottom: 14px; }
.t2 { height: 93px; padding-top: 4px; margin-bottom: 12px; }
.t3 { height: 127px; padding-top: 5px; }
.t4 { height: 65px; padding-top: 8px; margin-bottom: 14px; font-size: 15px; }
.t5 { height: 110px; padding-top: 4px; }

.left-tools { flex: none; width: 47px; display: flex; flex-direction: column; align-items: flex-start; }
.vgroup { display: flex; flex-direction: column; background: linear-gradient(90deg, #f8f8ff, #ececf6 45%, #b4b4cc); border-radius: 0 0 4px 0; }
.main-tools { flex: 1; width: 44px; min-height: 0; }
.main-tools .vitem { flex: 1; }
.main-tools .voverflow { margin-top: 4px; }
.sub-tools { flex: none; width: 33px; min-height: 132px; }
.vitem { display: flex; align-items: center; min-height: 0; padding-left: 1px; }
.vitem .tool { width: 31px; }
.active { background: #cde6f7; border: 1px solid #3c96dc; }
.hgrip { flex: none; height: 9px; width: 20px; margin-left: 7px; background: radial-gradient(circle, #8e8ea6 1px, transparent 1px) 0 3px / 4px 4px repeat-x; }
.hsep { flex: none; height: 8px; margin: 0 5px; background: linear-gradient(transparent 3px, #b8b8ca 3px, #b8b8ca 4px, transparent 4px); }
.voverflow { flex: none; height: 14px; margin-top: auto; display: flex; align-items: center; justify-content: flex-end; padding-right: 3px; background: linear-gradient(90deg, #dcdcee, #c6c6dc); }
.voverflow svg { width: 9px; height: 9px; }

.right-tools { flex: none; width: 35px; display: flex; flex-direction: column; }
.right-tools .tool { width: 31px; }
.right-tools .vitem { padding-left: 2px; }
.right-tools .last { flex: 1; }
.right-tools .voverflow { margin-top: 5px; }

.center { flex: 1; min-width: 0; display: flex; flex-direction: column; }
.workspace { position: relative; flex: 1; min-height: 0; overflow: hidden; background: #ababab; border-left: 1px solid #666; border-top: 1px solid #777; }
.toolrow.bottom { height: 36px; padding-top: 1px; background: #ececfe; }
.bottom .grip { width: 7px; }
.bottom .fit .overflow { margin-left: 4px; }

.wbtns { display: flex; gap: 3px; margin-left: auto; }
.wbtns button { width: 45px; height: 26px; display: grid; place-items: center; border: 1px solid #8597ad; border-radius: 2px; background: linear-gradient(#d2deeb, #c2d0e0); }
.wbtns svg { width: 25px; height: 21px; display: block; }
.mini-win { position: absolute; top: 2px; height: 35px; display: flex; align-items: center; padding: 0 3px; border: 1px solid #555c66; border-radius: 5px 5px 0 0; background: #d0dce9; }
.book { left: 147px; width: 217px; }
.blank { left: 363px; width: 148px; }
.book-icon { width: 22px; height: 22px; margin-right: 4px; }
.book span { font-size: 17px; color: #a0a8b0; }

.child { position: absolute; display: flex; flex-direction: column; }
.child header { flex: none; display: flex; align-items: center; }
.child h2 { margin: 0; font-size: 17px; font-weight: 400; }
.canvas { flex: 1; min-height: 0; background: #fff; border-left: 1px solid #888; border-top: 1px solid #777; overflow: hidden; }
.canvas svg { display: block; width: 100%; height: 100%; }
.second { left: 336px; top: 211px; width: 556px; height: 463px; padding: 0 10px 11px 9px; border: 1px solid #555c66; border-radius: 6px 6px 0 0; background: linear-gradient(#c2d0e0, #d8e4f1 42px); }
.second header { height: 40px; padding-top: 6px; }
.graph { left: 2px; top: 65px; width: 563px; height: 481px; padding: 0 8px 9px 7px; border: 4px solid #a2108c; border-radius: 5px 5px 0 0; background: linear-gradient(#9db7d4, #b9cee6 40px); }
.graph header { height: 38px; padding-top: 5px; }
.graph-icon { width: 22px; height: 22px; margin: 0 4px 0 1px; }
.graph .wbtns button { border-color: #6d87a8; background: linear-gradient(#b8cce4 45%, #94afd0 46%, #aac4e2); }
.graph .wbtns .red { border-color: #6a2a20; background: linear-gradient(#dc9484 45%, #bc4326 46%, #cc6044); }

.thin { fill: none; stroke: #222; stroke-width: 1; }
.mid { text-anchor: middle; }
.end { text-anchor: end; }
.song12 { font-family: "Liberation Serif", serif; font-size: 12px; }
.song13 { font-family: "Liberation Serif", serif; font-size: 13px; }
.song18 { font-family: "Liberation Serif", serif; font-size: 18px; fill: #222; }
.song18 .song13 { font-size: 13px; }
.layer { font: 700 22px "Liberation Sans", sans-serif; }
.axis { font: 700 19px "Liberation Sans", sans-serif; }
.axis-sup { font-size: 12px; }
.legend { font: 20px "Liberation Sans", sans-serif; }

.mini-bar { position: absolute; left: 492px; top: 156px; width: 172px; height: 88px; display: flex; flex-direction: column; padding-top: 2px; border: 1px solid #999; background: rgba(255, 255, 255, .72); }
.mini-row { flex: 1; display: flex; align-items: center; padding-left: 2px; }
.mini-row button { width: 33px; height: 34px; display: grid; place-items: center; }
.mini-row svg { width: 28px; height: 28px; }
.mini-more { height: 9px; display: grid; place-items: center; background: rgba(215, 222, 250, .5); }
.mini-more svg { width: 16px; height: 4px; }

.status { flex: none; height: 27px; display: flex; align-items: center; justify-content: flex-end; background: #f0f0ef; border-top: 1px solid #dadade; font-size: 15px; white-space: nowrap; }
.status span { padding: 0 2px; border-right: 1px solid #d4d4d8; line-height: 24px; }
.status .first { border-left: 1px solid #d4d4d8; margin-right: 9px; padding: 0 4px; }
.status .au { border-left: 1px solid #d4d4d8; padding-left: 5px; }
.resize { width: 12px; height: 12px; margin: 8px 3px 0 11px; fill: #b8b8b8; }
.orb { position: absolute; left: 0; bottom: -1px; width: 44px; height: 44px; }
.watermark { position: absolute; right: 25px; bottom: 19px; display: flex; align-items: center; gap: 6px; }
.watermark svg { width: 42px; height: 38px; }
.watermark span { font-size: 26px; line-height: 40px; color: #fff; text-shadow: 1px 1px 1px #444, -1px 0 1px #777, 0 -1px 1px #888; }
</style>
